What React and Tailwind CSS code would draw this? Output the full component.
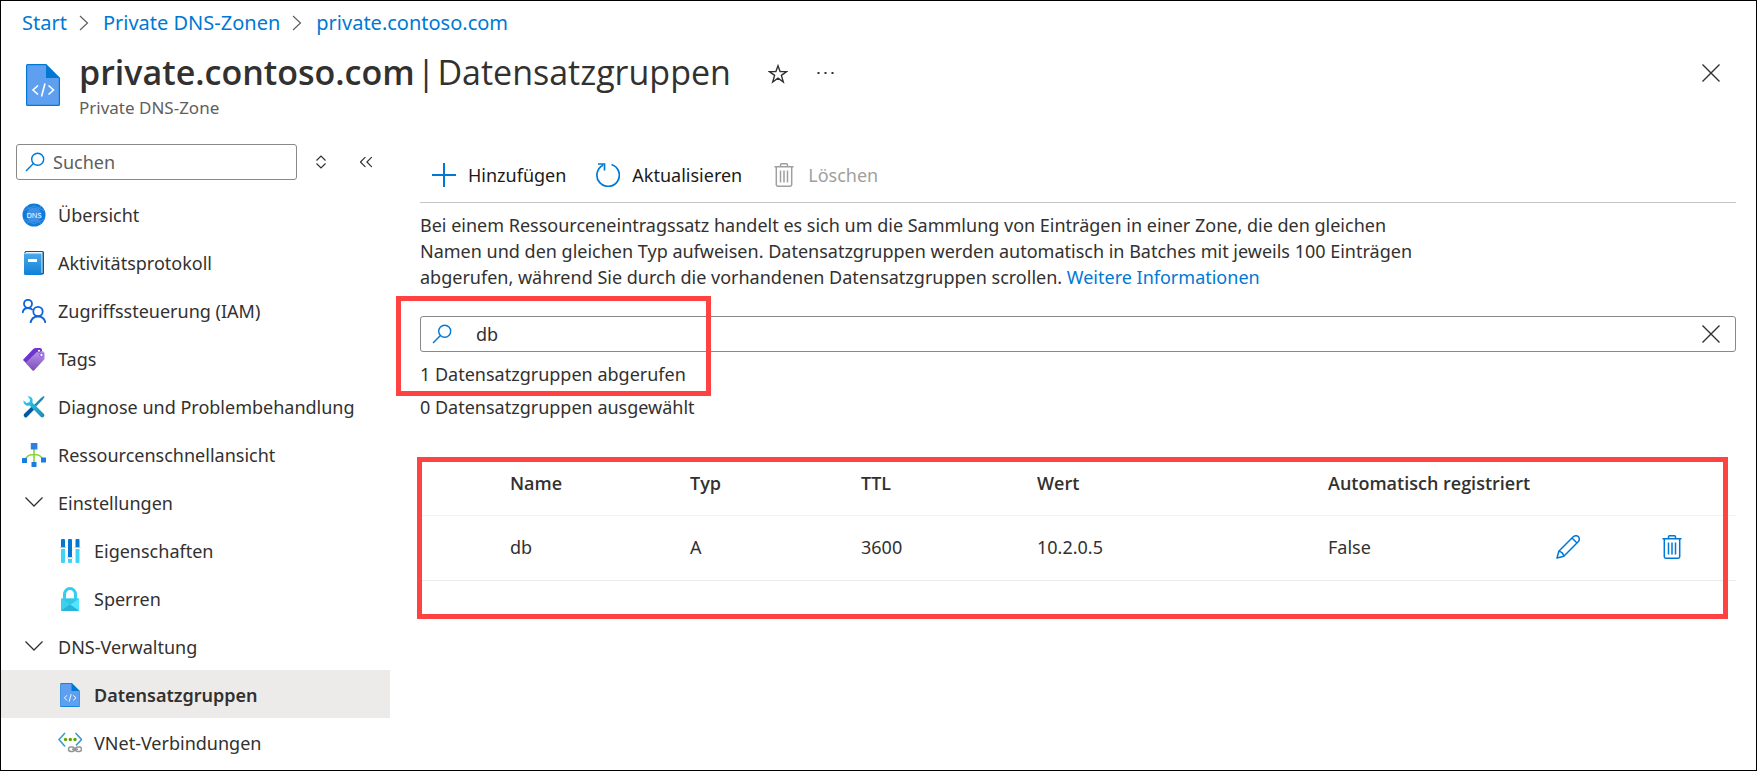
import { ChevronsLeft } from 'lucide-react'

function RecordIcon({ className }) {
  return (
    <svg viewBox="0 0 34 42" className={className} aria-hidden="true">
      <path d="M0 1.5A1.5 1.5 0 0 1 1.500 0H20L34 14V40.500A1.500 1.500 0 0 1 32.500 42H1.500A1.500 1.500 0 0 1 0 40.500Z" fill="#0078d4" />
      <path d="M1.200 1.200H20V14H32.800V40.800H1.200Z" fill="#5ea0ef" />
      <path d="M20 0L34 14H21.500A1.500 1.500 0 0 1 20 12.500Z" fill="#0078d4" />
      <path d="M12 21.500L7 26L12 30.500M22.500 21.500L27.500 26L22.500 30.500M19 19.500L15.500 32.500" fill="none" stroke="#fff" strokeWidth="1.600" />
    </svg>
  )
}

function DnsIcon() {
  return (
    <svg viewBox="0 0 24 24" className="size-6" aria-hidden="true">
      <circle cx="12" cy="12" r="11.500" fill="#0f7ad8" />
      <path d="M5 3L19 21M19 3L5 21M1 8L12 3L23 8M1 16L12 21L23 16" stroke="#4a9be8" strokeWidth="0.800" fill="none" />
      <circle cx="12" cy="12" r="7.500" fill="#3f8fe6" />
      <text x="12" y="14.700" textAnchor="middle" fontSize="7.500" fill="#fff" fontFamily="Open Sans, sans-serif">DNS</text>
    </svg>
  )
}

function LogIcon() {
  return (
    <svg viewBox="0 0 24 24" className="size-6" aria-hidden="true">
      <defs>
        <linearGradient id="log" x1="0" y1="0" x2="0" y2="1">
          <stop offset="0" stopColor="#4ba8ea" />
          <stop offset="1" stopColor="#0f80d7" />
        </linearGradient>
      </defs>
      <path d="M3.500 0H20.500A1.500 1.500 0 0 1 22 1.500V22A1.500 1.500 0 0 1 20.500 23.500H19V2H2Z" fill="#005b97" />
      <path d="M4 1H20.500V22H19V2.500H3Z" fill="#e6f3fb" />
      <path d="M2 2.500H19.500V24H3.500A1.500 1.500 0 0 1 2 22.500Z" fill="url(#log)" />
      <rect x="6" y="8" width="9" height="3" fill="#fff" />
    </svg>
  )
}

function PeopleIcon() {
  return (
    <svg viewBox="0 0 24 24" className="size-6" fill="none" stroke="#0f62de" strokeWidth="1.800" aria-hidden="true">
      <circle cx="6" cy="4.800" r="4" />
      <path d="M0.500 14C1 11 3 9 6 9C8 9 9.500 9.700 10.700 11" />
      <circle cx="16" cy="12.500" r="4.700" />
      <path d="M8.500 24C9.200 20 12 17.500 16 17.500C20 17.500 22.800 20 23.500 24" />
    </svg>
  )
}

function TagsIcon() {
  return (
    <svg viewBox="0 0 24 24" className="size-6" aria-hidden="true">
      <defs>
        <linearGradient id="tag" x1="0" y1="0" x2="0" y2="1">
          <stop offset="0" stopColor="#b796e8" />
          <stop offset="1" stopColor="#7b4cb8" />
        </linearGradient>
      </defs>
      <path d="M1.500 12.200L11.500 1.800Q12.500 1 14 1H18Q20 1 20 3V6L5.500 17.500L1.500 13.500Z" fill="#6f33d0" />
      <path d="M4.500 15L14.500 5.200Q15.500 4.200 17 4.200H20.500Q22.500 4.200 22.500 6.200V11Q22.500 12.200 21.500 13.200L12 23.500Q11.200 24.200 10.500 23.500L4.500 17Q3.500 16 4.500 15Z" fill="url(#tag)" />
      <circle cx="17" cy="3.800" r="1.500" fill="#fff" stroke="#4b1f9a" strokeWidth="0.700" />
      <circle cx="19.500" cy="8" r="1.700" fill="#fff" stroke="#6f33d0" strokeWidth="0.800" />
    </svg>
  )
}

function ToolsIcon() {
  return (
    <svg viewBox="0 0 24 24" className="size-6" aria-hidden="true">
      <defs>
        <linearGradient id="wrench" x1="0" y1="0" x2="1" y2="1">
          <stop offset="0" stopColor="#32d4f5" />
          <stop offset="1" stopColor="#198ab3" />
        </linearGradient>
      </defs>
      <path d="M21.800 1L22.600 1.800L20.800 4.600L12.600 13L10.800 11.200L19 3Z" fill="#198ab3" />
      <path d="M9.500 11.800L12.200 14.500L5 22Q3.800 23 2.500 22Q1 20.500 2 19Z" fill="#005ba1" />
      <path d="M5.500 1.200Q8.500 0.800 10 3Q11.200 5 10.400 7.600L22 19Q23 20.500 21.800 21.800Q20.500 23 19 22L7.600 10.400Q5 11.200 3 9.800Q1 8.200 1.500 5.300L4.600 8L7.400 7.300L8.200 4.600Z" fill="url(#wrench)" />
    </svg>
  )
}

function TreeIcon() {
  return (
    <svg viewBox="0 0 24 24" className="size-6" aria-hidden="true">
      <path d="M12 6V19M3 16.500Q6 11.800 9.500 11.800H14.500Q18 11.800 21 16.500" fill="none" stroke="#86d633" strokeWidth="1.600" />
      <rect x="8.800" y="0" width="6.600" height="6.600" rx="0.600" fill="#2f7fe0" />
      <rect x="0" y="15" width="5" height="5" rx="0.500" fill="#1a7be0" />
      <rect x="9.500" y="19" width="5" height="5" rx="0.500" fill="#1a7be0" />
      <rect x="19" y="14.500" width="5" height="5" rx="0.500" fill="#1a7be0" />
    </svg>
  )
}

function PropertiesIcon() {
  return (
    <svg viewBox="0 0 24 24" className="size-6" aria-hidden="true">
      <path d="M3 1A1 1 0 0 1 4 0H6A1 1 0 0 1 7 1V8H3ZM10 1A1 1 0 0 1 11 0H13A1 1 0 0 1 14 1V18H10ZM17.500 1A1 1 0 0 1 18.500 0H20.500A1 1 0 0 1 21.500 1V8H17.500Z" fill="#0078d4" />
      <path d="M3 10H7V23A1 1 0 0 1 6 24H4A1 1 0 0 1 3 23ZM10 20H14V23A1 1 0 0 1 13 24H11A1 1 0 0 1 10 23ZM17.500 10H21.500V23A1 1 0 0 1 20.500 24H18.500A1 1 0 0 1 17.500 23Z" fill="#3fd3f7" />
      <path d="M2 8.500H8M9 18.800H15M16.500 8.500H22.500" stroke="#c3c3c3" strokeWidth="1" />
    </svg>
  )
}

function LockIcon() {
  return (
    <svg viewBox="0 0 24 24" className="size-6" aria-hidden="true">
      <path d="M6.500 12V7.500A5.500 6 0 0 1 17.500 7.500V12" fill="none" stroke="#32cdf0" strokeWidth="3" />
      <path d="M3 11.500H21V23A1 1 0 0 1 20 24H4A1 1 0 0 1 3 23Z" fill="#50e6ff" />
      <path d="M3 12L12 18L3 24Z" fill="#3fd0ee" />
      <path d="M3 23.500L12 17.500L21 23.500L20 24H4Z" fill="#28b4d8" />
      <path d="M3 11.500H21L12 18Z" fill="#35c5e5" />
    </svg>
  )
}

function VnetIcon() {
  return (
    <svg viewBox="0 0 24 24" className="size-6" fill="none" aria-hidden="true">
      <path d="M7 2L1 8.500L7 15.500M17.500 2L23.500 8.500L18 14.500" stroke="#3a9bd0" strokeWidth="1.600" />
      <g fill="#5ea500">
        <circle cx="7.500" cy="8.500" r="1.700" />
        <circle cx="12.300" cy="8.500" r="1.700" />
        <circle cx="17" cy="8.500" r="1.700" />
      </g>
      <rect x="10.500" y="16" width="6" height="4.500" rx="2.200" stroke="#949494" strokeWidth="1.500" />
      <rect x="17.500" y="16" width="6" height="4.500" rx="2.200" stroke="#949494" strokeWidth="1.500" />
      <path d="M14 18.200H20" stroke="#949494" strokeWidth="1.500" />
    </svg>
  )
}

function SearchIcon() {
  return (
    <svg viewBox="0 0 20 20" className="size-5 shrink-0" fill="none" stroke="#0078d4" strokeWidth="1.400" aria-hidden="true">
      <circle cx="12.700" cy="7.300" r="6" />
      <path d="M8.400 11.600L1 19" />
    </svg>
  )
}

function TrashIcon() {
  return (
    <svg viewBox="0 0 24 24" className="size-6" fill="none" stroke="currentColor" strokeWidth="1.500" aria-hidden="true">
      <path d="M2.500 3.800H21.500M8.500 3.500V2Q8.500 0.800 9.500 0.800H14.500Q15.500 0.800 15.500 2V3.500M4.300 4V21.800Q4.300 23.200 5.700 23.200H18.300Q19.700 23.200 19.700 21.800V4M8.500 7.500V19.500M12 7.500V19.500M15.500 7.500V19.500" />
    </svg>
  )
}

function PencilIcon() {
  return (
    <svg viewBox="0 0 24 24" className="size-6" fill="none" stroke="currentColor" strokeWidth="1.500" strokeLinejoin="round" aria-hidden="true">
      <path d="M1 23L2.800 16.200L17.200 1.800Q18.300 0.700 20 0.700Q23.300 0.700 23.300 4Q23.300 5.700 22.200 6.800L7.800 21.200ZM16 3L21 8M2.800 16.200Q7 17 7.800 21.200" />
    </svg>
  )
}

function CloseIcon() {
  return (
    <svg viewBox="0 0 18 18" className="size-[18px]" stroke="#323130" strokeWidth="1.400" aria-hidden="true">
      <path d="M0.500 0.500L17.500 17.500M17.500 0.500L0.500 17.500" />
    </svg>
  )
}

function Chevron() {
  return (
    <svg viewBox="0 0 24 24" className="size-6" fill="none" stroke="#323130" strokeWidth="1.300" aria-hidden="true">
      <path d="M3.500 6.500L12 15L20.500 6.500" />
    </svg>
  )
}

const crumbs = ['Start', 'Private DNS-Zonen', 'private.contoso.com']

const nav = [
  { label: 'Übersicht', icon: <DnsIcon /> },
  { label: 'Aktivitätsprotokoll', icon: <LogIcon /> },
  { label: 'Zugriffssteuerung (IAM)', icon: <PeopleIcon /> },
  { label: 'Tags', icon: <TagsIcon /> },
  { label: 'Diagnose und Problembehandlung', icon: <ToolsIcon /> },
  { label: 'Ressourcenschnellansicht', icon: <TreeIcon /> },
  {
    label: 'Einstellungen',
    items: [
      { label: 'Eigenschaften', icon: <PropertiesIcon /> },
      { label: 'Sperren', icon: <LockIcon /> },
    ],
  },
  {
    label: 'DNS-Verwaltung',
    items: [
      { label: 'Datensatzgruppen', icon: <RecordIcon className="mx-[2px] h-6 w-5" />, active: true },
      { label: 'VNet-Verbindungen', icon: <VnetIcon /> },
    ],
  },
]

const records = [{ name: 'db', type: 'A', ttl: '3600', value: '10.2.0.5', auto: 'False' }]

function NavLink({ item, child }) {
  return (
    <a href="#" className={`flex h-12 items-center gap-3 pt-0.5 ${child ? 'pl-[57px]' : 'pl-[21px]'} ${item.active ? 'bg-[#edebe9] font-semibold' : ''}`}>
      {item.icon}
      <span className="whitespace-nowrap">{item.label}</span>
    </a>
  )
}

function Sidebar() {
  return (
    <aside className="w-[389px] shrink-0">
      <div className="mb-[10px] flex items-center pl-[15px]">
        <label className="flex h-9 w-[281px] items-center gap-2 rounded-[3px] border border-[#8a8886] px-2">
          <SearchIcon />
          <input type="search" aria-label="Suchen" placeholder="Suchen" className="min-w-0 flex-1 outline-none placeholder:text-[#605e5c]" />
        </label>
        <button aria-label="Sortieren" className="ml-[15px]">
          <svg viewBox="0 0 18 18" className="size-[18px]" fill="none" stroke="#323130" strokeWidth="1.200" aria-hidden="true">
            <path d="M4.500 7.500L9 3L13.500 7.500M4.500 10.500L9 15L13.500 10.500" />
          </svg>
        </button>
        <button aria-label="Menü einklappen" className="ml-[25px]"><ChevronsLeft size={22} strokeWidth={1.25} /></button>
      </div>
      <nav>
        {nav.map((item) => item.items ? (
          <div key={item.label}>
            <button className="flex h-12 w-full items-center gap-3 pt-0.5 pl-[21px]">
              <Chevron />
              {item.label}
            </button>
            {item.items.map((sub) => <NavLink key={sub.label} item={sub} child />)}
          </div>
        ) : <NavLink key={item.label} item={item} />)}
      </nav>
    </aside>
  )
}

function Toolbar() {
  return (
    <div className="mt-1 flex h-[55px] items-center gap-[30px] border-b border-[#c8c6c4] pl-3 text-[#1b1a19]">
      <button className="flex items-center gap-3">
        <svg viewBox="0 0 24 24" className="size-6" stroke="#0078d4" strokeWidth="2" aria-hidden="true"><path d="M12 0V24M0 12H24" /></svg>
        Hinzufügen
      </button>
      <button className="flex items-center gap-3">
        <svg viewBox="0 0 24 24" className="size-6" fill="none" stroke="#0078d4" strokeWidth="1.700" aria-hidden="true">
          <path d="M15.500 1.500A11.200 11.200 0 1 1 7 2.200M2 1H8.500V7.500" />
        </svg>
        Aktualisieren
      </button>
      <button disabled className="flex items-center gap-3 text-[#a19f9d]">
        <TrashIcon />
        Löschen
      </button>
    </div>
  )
}

function RecordTable() {
  return (
    <table className="w-full table-fixed text-left">
      <thead className="font-['Open_Sans',sans-serif]">
        <tr className="h-[65px] border-b border-[#f3f2f1] *:pt-0.5">
          <td className="w-[90px]" />
          <th className="w-[180px] font-semibold">Name</th>
          <th className="w-[171px] font-semibold">Typ</th>
          <th className="w-[176px] font-semibold">TTL</th>
          <th className="w-[291px] font-semibold">Wert</th>
          <th className="w-[228px] font-semibold whitespace-nowrap">Automatisch registriert</th>
          <td className="w-[104px]" />
          <td />
        </tr>
      </thead>
      <tbody>
        {records.map((r) => (
          <tr key={r.name} className="h-[65px] border-b border-[#edebe9] *:pb-0.5">
            <td />
            <td>{r.name}</td>
            <td>{r.type}</td>
            <td>{r.ttl}</td>
            <td>{r.value}</td>
            <td>{r.auto}</td>
            <td><button aria-label="Bearbeiten" className="block text-[#0078d4]"><PencilIcon /></button></td>
            <td><button aria-label="Löschen" className="block text-[#0078d4]"><TrashIcon /></button></td>
          </tr>
        ))}
      </tbody>
    </table>
  )
}

export default function App() {
  return (
    <div className="min-h-screen border border-black bg-white font-['Noto_Sans',sans-serif] text-[18px] leading-[26px] text-[#323130]">
      <header className="h-[143px]">
        <nav className="flex h-[43px] items-center gap-2 pl-[21px] text-[20px] text-[#0078d4]">
          {crumbs.map((c, i) => (
            <span key={c} className="flex items-center gap-2">
              {i > 0 && (
                <svg viewBox="0 0 20 20" className="size-5" fill="none" stroke="#605e5c" strokeWidth="1.200" aria-hidden="true">
                  <path d="M5 3L12.500 10L5 17" />
                </svg>
              )}
              <a href="#">{c}</a>
            </span>
          ))}
        </nav>
        <div className="flex items-start pr-9 pl-[25px]">
          <RecordIcon className="mt-5 h-[42px] w-[34px] shrink-0" />
          <div className="ml-[19px]">
            <h1 className="mt-1 flex gap-[6px] font-['Open_Sans',sans-serif] text-[34px] leading-[48px] whitespace-nowrap">
              <span className="font-semibold">private.contoso.com</span>
              <span className="-mx-1">|</span>
              <span>Datensatzgruppen</span>
            </h1>
            <p className="text-[17px] leading-6 text-[#605e5c]">Private DNS-Zone</p>
          </div>
          <button aria-label="Favorit" className="mt-5 ml-[37px]">
            <svg viewBox="0 0 20 20" className="size-5" fill="none" stroke="#323130" strokeWidth="1.400" aria-hidden="true">
              <path d="M10 1.800L12.100 7.600H18.600L13.400 11.400L15.300 18L10 14.100L4.700 18L6.600 11.400L1.400 7.600H7.900Z" />
            </svg>
          </button>
          <button aria-label="Mehr" className="mt-5 ml-7">
            <svg viewBox="0 0 20 20" className="size-5" fill="#323130" aria-hidden="true">
              <path d="M1.500 8H3.500V10H1.500ZM8.500 8H10.500V10H8.500ZM15.500 8H17.500V10H15.500Z" />
            </svg>
          </button>
          <button aria-label="Schließen" className="mt-5 ml-auto"><CloseIcon /></button>
        </div>
      </header>
      <div className="flex">
        <Sidebar />
        <main className="min-w-0 flex-1 pr-5 pl-[30px]">
          <Toolbar />
          <p className="mt-[9px] max-w-[1020px]">
            Bei einem Ressourceneintragssatz handelt es sich um die Sammlung von Einträgen in einer Zone, die den gleichen Namen und den gleichen Typ aufweisen. Datensatzgruppen werden automatisch in Batches mit jeweils 100 Einträgen abgerufen, während Sie durch die vorhandenen Datensatzgruppen scrollen. <a href="#" className="text-[#0078d4]">Weitere Informationen</a>
          </p>
          <section className="relative mt-[26px]">
            <label className="flex h-9 items-center rounded-[3px] border border-[#8a8886] pr-[15px] pl-[11px]">
              <SearchIcon />
              <input type="text" aria-label="Datensatzgruppen suchen" defaultValue="db" className="ml-6 min-w-0 flex-1 outline-none" />
              <button aria-label="Suche löschen"><CloseIcon /></button>
            </label>
            <p className="mt-[9px]">1 Datensatzgruppen abgerufen</p>
            <div className="pointer-events-none absolute -top-5 -left-6 h-[100px] w-[315px] border-5 border-[#ff4343]" />
          </section>
          <p className="mt-[7px]">0 Datensatzgruppen ausgewählt</p>
          <section className="relative mt-[30px]">
            <RecordTable />
            <div className="pointer-events-none absolute top-[7px] right-2 -left-[3px] h-[162px] border-5 border-[#ff4343]" />
          </section>
        </main>
      </div>
    </div>
  )
}
